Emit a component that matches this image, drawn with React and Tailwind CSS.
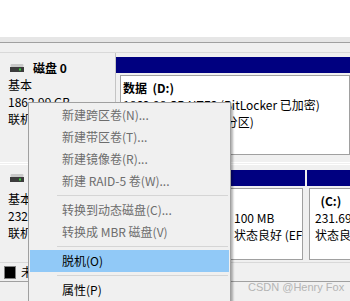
import React from 'react';

const DiskIcon = () => (
    <svg width="14" height="8" viewBox="0 0 14 8" className="shrink-0">
        <rect x="0.5" y="0" width="13" height="3" rx="1" fill="#c9c9c9" />
        <rect x="0" y="3" width="14" height="5" fill="#3c3c3c" />
        <rect x="9" y="4.5" width="2" height="2" fill="#35d23b" />
    </svg>
);

const menuItems = [
    { label: '新建跨区卷(N)...', disabled: true },
    { label: '新建带区卷(T)...', disabled: true },
    { label: '新建镜像卷(R)...', disabled: true },
    { label: '新建 RAID-5 卷(W)...', disabled: true },
    { sep: true },
    { label: '转换到动态磁盘(C)...', disabled: true },
    { label: '转换成 MBR 磁盘(V)', disabled: true },
    { sep: true },
    { label: '脱机(O)', active: true },
    { sep: true },
    { label: '属性(P)' },
];

const ContextMenu = () => (
    <div className="absolute left-[28px] top-[102px] w-[203px] h-[210px] bg-[#f0f0f0] border border-[#a0a0a0] shadow-[2px_2px_2px_rgba(0,0,0,0.3)] pt-px">
        {menuItems.map((item, i) =>
            item.sep ? (
                <div key={i} className="h-[7px] pt-[3px] ml-[28px] mr-[2px]">
                    <div className="h-px bg-[#d5d5d5]" />
                </div>
            ) : (
                <div
                    key={i}
                    className={`h-[22px] mx-px pl-[32px] flex items-center whitespace-nowrap ${item.active ? 'bg-[#91c9f7] text-black' : ''} ${item.disabled ? 'text-[#6d6d6d]' : 'text-black'}`}
                >
                    {item.label}
                </div>
            )
        )}
    </div>
);

const Partition = ({ className, lines, boxH, boxClass }) => (
    <div className={className}>
        <div className="h-[16px] bg-[#000080]" />
        <div className={`mt-[2px] bg-white border border-[#a0a0a0] overflow-hidden whitespace-nowrap leading-[17px] pt-[3px] ${boxClass}`} style={{ height: boxH }}>
            {lines.map((l, i) => (
                <div key={i} className={i === 0 ? 'font-bold' : ''}>{l}</div>
            ))}
        </div>
    </div>
);

export default function App() {
    return (
        <div className="relative w-[350px] h-[301px] overflow-hidden bg-white text-[12px] text-black font-['Noto_Sans_CJK_SC',sans-serif]">
            <div className="h-[37px] bg-white" />
            <div className="h-[5px] bg-[#e6e6e6]" />
            <div className="h-px bg-[#a0a0a0]" />
            <div className="bg-[#f0f0f0]">
                <div className="h-[9px]" />

                {/* Disk 0 */}
                <div className="h-[110px] flex border-t border-[#d9d9d9]">
                    <div className="w-[116px] shrink-0 border-r border-[#c4c4c4] pl-[8px] pt-[6px] leading-[17px]">
                        <div className="flex items-center h-[17px] gap-[9px] pl-[2px]">
                            <DiskIcon />
                            <span className="font-bold">磁盘 0</span>
                        </div>
                        <div>基本</div>
                        <div>1862.99 GB</div>
                        <div>联机</div>
                    </div>
                    <div className="flex-1 pt-[4px]">
                        <Partition
                            className="w-full"
                            boxH={80}
                            boxClass="ml-[4px] pl-[2px]"
                            lines={['数据\u00a0\u00a0(D:)', '1862.98 GB NTFS (BitLocker 已加密)', '状态良好 (基本数据分区)']}
                        />
                    </div>
                </div>

                <div className="h-[3px] border-y border-white" />

                {/* Disk 1 */}
                <div className="h-[97px] flex">
                    <div className="w-[116px] shrink-0 border-r border-[#c4c4c4] pl-[8px] pt-[4px] leading-[17px]">
                        <div className="flex items-center h-[17px] gap-[9px] pl-[2px]">
                            <DiskIcon />
                            <span className="font-bold">磁盘 1</span>
                        </div>
                        <div className="mt-[4px]">基本</div>
                        <div>232.88 GB</div>
                        <div>联机</div>
                    </div>
                    <div className="flex-1 flex gap-[2px] pt-[5px]">
                        <Partition className="w-[110px] shrink-0" boxH={72} boxClass="mx-[2px] pl-[3px]" lines={['\u00a0', '16 MB', '状态良好 (OEM 分区)']} />
                        <Partition className="w-[77px] shrink-0" boxH={72} boxClass="mx-[2px] pl-[3px]" lines={['\u00a0', '100 MB', '状态良好 (EFI 系统分区)']} />
                        <Partition className="flex-1 min-w-0" boxH={72} boxClass="ml-[2px] pl-[5px]" lines={['\u00a0\u00a0(C:)', '231.69 GB NTFS', '状态良好 (启动, 页面文件)']} />
                    </div>
                </div>

                {/* Legend */}
                <div className="h-[20px] flex items-center pl-[4px] gap-[5px] border-t border-[#d9d9d9] border-b border-b-[#a0a0a0]">
                    <div className="w-[12px] h-[13px] bg-black border border-[#808080]" />
                    <span>未分配</span>
                    <div className="w-[12px] h-[13px] bg-[#000080] border border-[#808080] ml-[6px]" />
                    <span>主分区</span>
                </div>
                <div className="h-[19px]" />
            </div>

            <ContextMenu />

            <div className="absolute left-[248px] top-[279px] font-['Liberation_Sans',sans-serif] text-[11px] text-[#b4b4b4]">
                CSDN @Henry Fox
            </div>
        </div>
    );
}
